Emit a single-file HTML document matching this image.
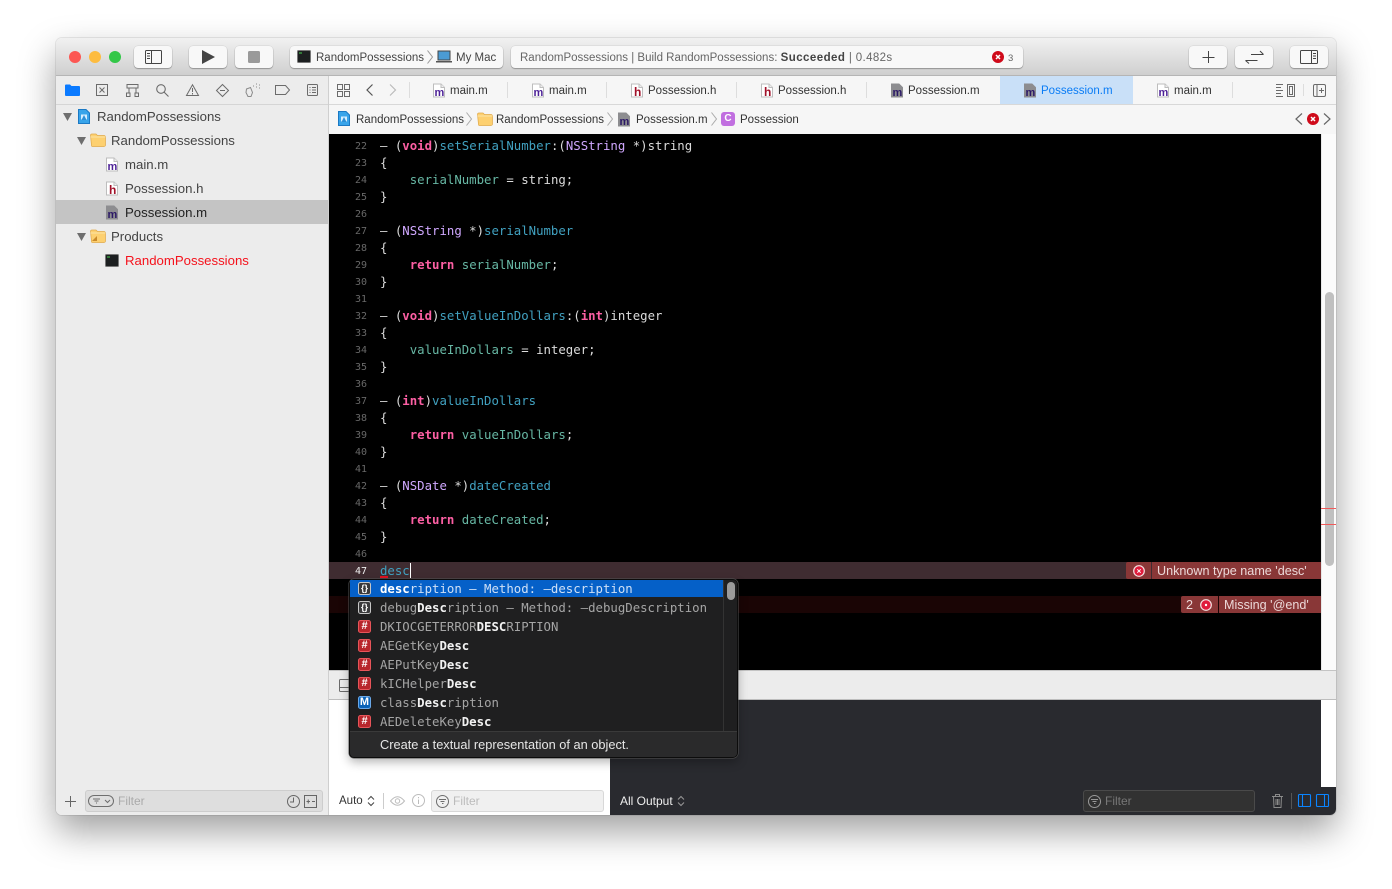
<!DOCTYPE html>
<html><head><meta charset="utf-8"><title>Xcode</title>
<style>
*{box-sizing:border-box}
html,body{margin:0;padding:0;width:1392px;height:889px;overflow:hidden;background:#fff}
body{font-family:"Liberation Sans",sans-serif;position:relative}
#win{position:absolute;left:56px;top:38px;width:1280px;height:777px;border-radius:6px;box-shadow:0 0 0 1px rgba(0,0,0,.08),0 16px 36px rgba(0,0,0,.38)}
.a{position:absolute}
.t{position:absolute;white-space:pre;line-height:16px;color:#3c3c3c;margin-top:1px}
svg{position:absolute;overflow:visible}
.btn{position:absolute;top:46px;height:22px;background:#f8f8f8;border-radius:4px;box-shadow:0 1px 1px rgba(0,0,0,.28),0 0 0 .5px rgba(0,0,0,.1)}
.tb{font-size:11.5px;top:49px;color:#444}
.tab{font-size:11.5px;top:82px;color:#333}
.jb{font-size:11.5px;top:111px;color:#333}
.sb{font-size:13.2px;color:#444}
.sep{position:absolute;top:82px;width:1px;height:16px;background:#ddd}
.ln{position:absolute;left:329px;width:38px;text-align:right;font:10px/17px "DejaVu Sans Mono","Liberation Mono",monospace;color:#686868;margin-top:1px}
.c{position:absolute;left:380px;white-space:pre;font:12.35px/17px "DejaVu Sans Mono","Liberation Mono",monospace;color:#dcdcdc;margin-top:1px}
.k{color:#fc5fa3;font-weight:bold}.p{color:#d0a8ff}.m{color:#41a1c0}.v{color:#67b7a4}
.r{position:absolute;left:380px;white-space:pre;font:12.35px/19px "DejaVu Sans Mono","Liberation Mono",monospace;color:#a5a5a5;margin-top:1px}
.r b{color:#f2f2f2}
.ic{position:absolute;left:358px;width:13px;height:13px;border-radius:2.5px;font:bold 11px/11px "Liberation Sans",sans-serif;text-align:center;color:#fff;border:1px solid #d9d9d9}
.h{background:#b8262c;border-color:#e8555a}
.b{background:#3a3a3c;border-color:#c6c6c6;font-size:9px}
.n{background:#0a62b8;border-color:#6aa8e8}
.e{position:absolute;background:#893737;height:17px;color:#ecd9d9;font-size:12.6px;line-height:17px;padding-top:1px;white-space:pre}
</style></head><body>
<svg width="0" height="0" style="position:absolute"><defs>
<symbol id="doc" viewBox="0 0 12 14"><path d="M.5.5h7.5l3.5 3.5v9.500h-11z" fill="#fff" stroke="#bdbdbd"/><path d="M8 .5v3.500h3.500" fill="#eee" stroke="#bdbdbd"/></symbol>
<symbol id="docg" viewBox="0 0 12 14"><path d="M.5.500h7.500l3.500 3.500v9.500h-11z" fill="#8d8d90" stroke="#8d8d90"/></symbol>
<symbol id="fold" viewBox="0 0 16 14"><path d="M.5 2.500a1.500 1.500 0 0 1 1.500-1.500h4l1.500 1.500h6.500a1.500 1.500 0 0 1 1.500 1.500v8a1.500 1.500 0 0 1-1.500 1.500h-11.500a1 1 0 0 1-1-1z" fill="#fdd070" stroke="#e0a94a" stroke-width=".7"/><path d="M.7 4h14.600" stroke="#fbe3a6"/></symbol>
<symbol id="proj" viewBox="0 0 12 15"><path d="M.5.500h7.500l3.500 3.500v10.500h-11z" fill="#38a4ea" stroke="#1b79c4"/><path d="M3 5.500h6v5h-6z" fill="#d6eeff"/><path d="M6 6l-2.500 5h5z" fill="#2c8fd6"/></symbol>
<symbol id="term" viewBox="0 0 14 13"><rect x=".5" y=".5" width="13" height="12" rx="1" fill="#1c1f20" stroke="#777"/><path d="M2 3h3" stroke="#48d050"/></symbol>
<symbol id="erri" viewBox="0 0 12 12"><circle cx="6" cy="6" r="6" fill="#cf0a1a"/><path d="M4 4l4 4M8 4l-4 4" stroke="#fff" stroke-width="1.500"/></symbol>
</defs></svg>

<div id="win"></div>

<!-- title bar -->
<div class="a" style="left:56px;top:38px;width:1280px;height:38px;background:linear-gradient(#f1f1f1,#cfcfcf);border-radius:6px 6px 0 0;border-bottom:1px solid #b5b5b5"></div>
<div class="a" style="left:69px;top:51px;width:12px;height:12px;border-radius:50%;background:#fc5753"></div>
<div class="a" style="left:89px;top:51px;width:12px;height:12px;border-radius:50%;background:#fdbc40"></div>
<div class="a" style="left:109px;top:51px;width:12px;height:12px;border-radius:50%;background:#33c748"></div>

<div class="btn" style="left:134px;width:38px"></div>
<svg style="left:145px;top:50px" width="17" height="14" fill="none" stroke="#444"><rect x=".5" y=".5" width="16" height="13" rx="1"/><path d="M6.500 .5v13M2 3.500h3M2 6h3M2 8.500h3"/></svg>
<div class="btn" style="left:189px;width:38px"></div>
<svg style="left:201px;top:50px" width="14" height="14"><path d="M1 0l13 7-13 7z" fill="#444"/></svg>
<div class="btn" style="left:235px;width:38px"></div>
<div class="a" style="left:248px;top:51px;width:12px;height:12px;border-radius:1.500px;background:#9a9a9a"></div>

<div class="btn" style="left:290px;width:213px"></div>
<svg style="left:297px;top:50px" width="14" height="13"><use href="#term"/></svg>
<div class="t tb" style="left:316px">RandomPossessions</div>
<svg style="left:427px;top:50px" width="6" height="14" fill="none" stroke="#999"><path d="M.5 .5l5 6.500-5 6.500"/></svg>
<svg style="left:436px;top:50px" width="16" height="13"><rect x="2" y="1" width="12" height="9" fill="#4b9bd3" stroke="#444"/><path d="M0 11h16v1.500h-16z" fill="#555"/></svg>
<div class="t tb" style="left:456px">My Mac</div>

<div class="btn" style="left:511px;width:512px"></div>
<div class="t tb" style="left:520px;color:#666">RandomPossessions | Build RandomPossessions: <b style="color:#444;letter-spacing:.45px">Succeeded</b><span style="letter-spacing:.35px"> | 0.482s</span></div>
<svg style="left:992px;top:51px" width="12" height="12"><use href="#erri"/></svg>
<div class="t" style="left:1008px;top:50px;font-size:9.500px;color:#666">3</div>

<div class="btn" style="left:1189px;width:38px"></div>
<svg style="left:1202px;top:51px" width="12" height="12" stroke="#444" fill="none"><path d="M6.500 0v12M.5 6.500h12"/></svg>
<div class="btn" style="left:1235px;width:38px"></div>
<svg style="left:1245px;top:50px" width="19" height="14" stroke="#444" fill="none"><path d="M6 4.500h12.500M15 1l3.500 3.500M.5 10.500h12M.5 10.500l3.500 3"/></svg>
<div class="btn" style="left:1290px;width:38px"></div>
<svg style="left:1300px;top:50px" width="18" height="14" fill="none" stroke="#444"><rect x=".5" y=".5" width="17" height="13" rx="1"/><path d="M11.500 .5v13M13 3.500h3M13 6h3M13 8.500h3"/></svg>

<!-- navigator -->
<div class="a" style="left:56px;top:76px;width:273px;height:739px;background:#ececec;border-right:1px solid #cfcfcf;border-radius:0 0 0 6px"></div>
<div class="a" style="left:56px;top:104px;width:272px;height:1px;background:#d5d5d5"></div>
<svg style="left:65px;top:84px" width="15" height="12"><path d="M0 1.500a1 1 0 0 1 1-1h4l1.500 1.500h7.500a1 1 0 0 1 1 1v1.500h-15zM0 4h15v7a1 1 0 0 1-1 1h-13a1 1 0 0 1-1-1z" fill="#0a7aff"/></svg>
<svg style="left:96px;top:84px" width="12" height="12" fill="none" stroke="#6b6b6b"><rect x=".5" y=".5" width="11" height="11"/><path d="M3.500 3.500l5 5M8.500 3.500l-5 5"/></svg>
<svg style="left:126px;top:84px" width="13" height="13" fill="none" stroke="#6b6b6b"><rect x="1" y=".5" width="11" height="3.500"/><rect x=".5" y="9" width="3.500" height="3.500"/><rect x="9" y="9" width="3.500" height="3.500"/><path d="M3 4v5M10 4v5"/></svg>
<svg style="left:156px;top:84px" width="13" height="13" fill="none" stroke="#6b6b6b" stroke-width="1.100"><circle cx="5" cy="5" r="4.300"/><path d="M8 8l4.500 4.500"/></svg>
<svg style="left:186px;top:84px" width="13" height="12" fill="none" stroke="#6b6b6b"><path d="M6.500 .8l6 10.700h-12zM6.500 4v4M6.500 9v1.500"/></svg>
<svg style="left:216px;top:84px" width="13" height="13" fill="none" stroke="#6b6b6b"><path d="M6.500 .5l6 6-6 6-6-6zM4 6.500h5"/></svg>
<svg style="left:245px;top:83px" width="16" height="14" fill="none" stroke="#8a8a8a"><path d="M1.500 6l4-1.500 2 5-1.500 4h-3l-2-4z"/><path d="M8 3h1M11 1h1M11 4h1M14 2h1M14 5h1" stroke-dasharray="1 1"/></svg>
<svg style="left:275px;top:85px" width="15" height="10" fill="none" stroke="#6b6b6b"><path d="M.5 .5h10l4 4.500-4 4.500h-10z"/></svg>
<svg style="left:307px;top:84px" width="11" height="12" fill="none" stroke="#6b6b6b"><rect x=".5" y=".5" width="10" height="11" rx="1"/><path d="M2.500 3.500h1M5 3.500h4M2.500 6h1M5 6h4M2.500 8.500h1M5 8.500h4"/></svg>

<div class="a" style="left:56px;top:200px;width:272px;height:24px;background:#c4c4c4"></div>
<svg style="left:63px;top:113px" width="9" height="8"><path d="M0 0h9l-4.500 8z" fill="#6e6e6e"/></svg>
<svg style="left:78px;top:109px" width="12" height="15"><use href="#proj"/></svg>
<div class="t sb" style="left:97px;top:108px">RandomPossessions</div>
<svg style="left:77px;top:137px" width="9" height="8"><path d="M0 0h9l-4.500 8z" fill="#6e6e6e"/></svg>
<svg style="left:90px;top:133px" width="16" height="14"><use href="#fold"/></svg>
<div class="t sb" style="left:111px;top:132px">RandomPossessions</div>
<svg style="left:106px;top:157px" width="12" height="15"><use href="#doc"/><text x="1.500" y="13" font-family="Liberation Sans,sans-serif" font-weight="bold" font-size="11" fill="#4b1f96">m</text></svg>
<div class="t sb" style="left:125px;top:156px">main.m</div>
<svg style="left:106px;top:181px" width="12" height="15"><use href="#doc"/><text x="3" y="13" font-family="Liberation Sans,sans-serif" font-weight="bold" font-size="12" fill="#a11129">h</text></svg>
<div class="t sb" style="left:125px;top:180px">Possession.h</div>
<svg style="left:106px;top:205px" width="12" height="15"><use href="#docg"/><text x="1.500" y="13" font-family="Liberation Sans,sans-serif" font-weight="bold" font-size="11" fill="#2b1866">m</text></svg>
<div class="t sb" style="left:125px;top:204px;color:#222">Possession.m</div>
<svg style="left:77px;top:233px" width="9" height="8"><path d="M0 0h9l-4.500 8z" fill="#6e6e6e"/></svg>
<svg style="left:90px;top:229px" width="16" height="14"><use href="#fold"/><path d="M2 12l5-5v5z" fill="#c98a2a"/></svg>
<div class="t sb" style="left:111px;top:228px">Products</div>
<svg style="left:105px;top:254px" width="14" height="13"><use href="#term"/></svg>
<div class="t sb" style="left:125px;top:252px;color:#f5121c">RandomPossessions</div>

<svg style="left:65px;top:796px" width="11" height="11" stroke="#666" fill="none"><path d="M5.500 0v11M0 5.500h11"/></svg>
<div class="a" style="left:85px;top:790px;width:238px;height:22px;background:#dedede;border:1px solid #cdcdcd;border-radius:3px"></div>
<svg style="left:88px;top:795px" width="26" height="12" fill="none" stroke="#6e6e6e"><rect x=".5" y=".5" width="25" height="11" rx="5.500"/><path d="M5 4h7M6.500 6h4M8 8h1M17 5l2.500 2.500 2.500-2.500"/></svg>
<div class="t" style="left:118px;top:792px;font-size:12px;color:#aaa">Filter</div>
<svg style="left:287px;top:795px" width="13" height="13" fill="none" stroke="#666"><circle cx="6.500" cy="6.500" r="6"/><path d="M6.500 2.500v4.500h-3.500"/></svg>
<svg style="left:304px;top:795px" width="13" height="13" fill="none" stroke="#666"><rect x=".5" y=".5" width="12" height="12"/><path d="M2.500 6.500h3.500M4.250 4.500v4M8 6.500h3"/></svg>

<!-- tab bar -->
<div class="a" style="left:329px;top:76px;width:1007px;height:29px;background:#f6f6f6;border-bottom:1px solid #d8d8d8"></div>
<div class="a" style="left:1000px;top:76px;width:133px;height:28px;background:#c9e0f8"></div>
<svg style="left:337px;top:84px" width="13" height="13" fill="none" stroke="#6b6b6b"><rect x=".5" y=".5" width="5" height="5"/><rect x="7.500" y=".5" width="5" height="5"/><rect x=".5" y="7.500" width="5" height="5"/><rect x="7.500" y="7.500" width="5" height="5"/></svg>
<svg style="left:366px;top:84px" width="8" height="12" fill="none" stroke="#555" stroke-width="1.200"><path d="M6.500 .5l-5.500 5.500 5.500 5.500"/></svg>
<svg style="left:389px;top:84px" width="8" height="12" fill="none" stroke="#bbb" stroke-width="1.200"><path d="M1 .5l5.500 5.500-5.500 5.500"/></svg>
<div class="sep" style="left:409px"></div><div class="sep" style="left:507px"></div><div class="sep" style="left:606px"></div><div class="sep" style="left:736px"></div><div class="sep" style="left:866px"></div><div class="sep" style="left:1232px"></div><div class="sep" style="left:1303px;height:12px;top:84px"></div>

<svg style="left:433px;top:83px" width="12" height="15"><use href="#doc"/><text x="1.500" y="13" font-family="Liberation Sans,sans-serif" font-weight="bold" font-size="11" fill="#4b1f96">m</text></svg>
<div class="t tab" style="left:450px">main.m</div>
<svg style="left:532px;top:83px" width="12" height="15"><use href="#doc"/><text x="1.500" y="13" font-family="Liberation Sans,sans-serif" font-weight="bold" font-size="11" fill="#4b1f96">m</text></svg>
<div class="t tab" style="left:549px">main.m</div>
<svg style="left:631px;top:83px" width="12" height="15"><use href="#doc"/><text x="3" y="13" font-family="Liberation Sans,sans-serif" font-weight="bold" font-size="12" fill="#a11129">h</text></svg>
<div class="t tab" style="left:648px">Possession.h</div>
<svg style="left:761px;top:83px" width="12" height="15"><use href="#doc"/><text x="3" y="13" font-family="Liberation Sans,sans-serif" font-weight="bold" font-size="12" fill="#a11129">h</text></svg>
<div class="t tab" style="left:778px">Possession.h</div>
<svg style="left:891px;top:83px" width="12" height="15"><use href="#docg"/><text x="1.500" y="13" font-family="Liberation Sans,sans-serif" font-weight="bold" font-size="11" fill="#2b1866">m</text></svg>
<div class="t tab" style="left:908px">Possession.m</div>
<svg style="left:1024px;top:83px" width="12" height="15"><use href="#docg"/><text x="1.500" y="13" font-family="Liberation Sans,sans-serif" font-weight="bold" font-size="11" fill="#2b1866">m</text></svg>
<div class="t tab" style="left:1041px;color:#0a7cf5">Possession.m</div>
<svg style="left:1157px;top:83px" width="12" height="15"><use href="#doc"/><text x="1.500" y="13" font-family="Liberation Sans,sans-serif" font-weight="bold" font-size="11" fill="#4b1f96">m</text></svg>
<div class="t tab" style="left:1174px">main.m</div>
<svg style="left:1276px;top:84px" width="19" height="13" fill="none" stroke="#6b6b6b"><path d="M0 .5h7M0 3.500h5M0 6.500h7M0 9.500h5M0 12.500h7"/><rect x="11.500" y=".5" width="7" height="12"/><rect x="13.500" y="2.500" width="3" height="8"/></svg>
<svg style="left:1313px;top:84px" width="13" height="13" fill="none" stroke="#6b6b6b"><rect x=".5" y=".5" width="12" height="12" rx="1.500"/><path d="M4 .5v12M6 6.500h5M8.500 4v5"/></svg>

<!-- jump bar -->
<div class="a" style="left:329px;top:105px;width:1007px;height:29px;background:#f6f6f6"></div>
<svg style="left:338px;top:111px" width="12" height="15"><use href="#proj"/></svg>
<div class="t jb" style="left:356px">RandomPossessions</div>
<svg style="left:466px;top:112px" width="6" height="14" fill="none" stroke="#aaa"><path d="M.5 .5l5 6.500-5 6.500"/></svg>
<svg style="left:477px;top:112px" width="16" height="14"><use href="#fold"/></svg>
<div class="t jb" style="left:496px">RandomPossessions</div>
<svg style="left:607px;top:112px" width="6" height="14" fill="none" stroke="#aaa"><path d="M.5 .5l5 6.500-5 6.500"/></svg>
<svg style="left:618px;top:112px" width="12" height="15"><use href="#docg"/><text x="1.500" y="13" font-family="Liberation Sans,sans-serif" font-weight="bold" font-size="11" fill="#2b1866">m</text></svg>
<div class="t jb" style="left:636px">Possession.m</div>
<svg style="left:711px;top:112px" width="6" height="14" fill="none" stroke="#aaa"><path d="M.5 .5l5 6.500-5 6.500"/></svg>
<div class="a" style="left:721px;top:112px;width:14px;height:14px;border-radius:3px;background:#c16fe0;color:#fff;font:bold 10px/14px 'Liberation Sans',sans-serif;text-align:center">C</div>
<div class="t jb" style="left:740px">Possession</div>
<svg style="left:1295px;top:113px" width="8" height="12" fill="none" stroke="#666" stroke-width="1.200"><path d="M7 .5l-6 5.500 6 5.500"/></svg>
<svg style="left:1307px;top:113px" width="12" height="12"><use href="#erri"/></svg>
<svg style="left:1323px;top:113px" width="8" height="12" fill="none" stroke="#666" stroke-width="1.200"><path d="M1 .5l6 5.500-6 5.500"/></svg>

<!-- editor -->
<div class="a" style="left:329px;top:134px;width:992px;height:536px;background:#000"></div>
<div class="a" style="left:1321px;top:134px;width:15px;height:536px;background:#fbfbfb;border-left:1px solid #e8e8e8"></div>
<div class="a" style="left:1325px;top:292px;width:9px;height:274px;border-radius:4.500px;background:#c0c0c0"></div>
<div class="a" style="left:1321px;top:508px;width:15px;height:1px;background:#f05a5a"></div>
<div class="a" style="left:1321px;top:524px;width:15px;height:1px;background:#f05a5a"></div>
<div class="a" style="left:329px;top:562px;width:992px;height:17px;background:#3f2c31"></div>
<div class="a" style="left:329px;top:596px;width:992px;height:17px;background:#1a0505"></div>

<div class="ln" style="top:137px">22</div><div class="ln" style="top:154px">23</div><div class="ln" style="top:171px">24</div><div class="ln" style="top:188px">25</div><div class="ln" style="top:205px">26</div><div class="ln" style="top:222px">27</div><div class="ln" style="top:239px">28</div><div class="ln" style="top:256px">29</div><div class="ln" style="top:273px">30</div><div class="ln" style="top:290px">31</div><div class="ln" style="top:307px">32</div><div class="ln" style="top:324px">33</div><div class="ln" style="top:341px">34</div><div class="ln" style="top:358px">35</div><div class="ln" style="top:375px">36</div><div class="ln" style="top:392px">37</div><div class="ln" style="top:409px">38</div><div class="ln" style="top:426px">39</div><div class="ln" style="top:443px">40</div><div class="ln" style="top:460px">41</div><div class="ln" style="top:477px">42</div><div class="ln" style="top:494px">43</div><div class="ln" style="top:511px">44</div><div class="ln" style="top:528px">45</div><div class="ln" style="top:545px">46</div><div class="ln" style="top:562px;color:#f0f0f0">47</div>

<div class="c" style="top:137px">– (<span class="k">void</span>)<span class="m">setSerialNumber</span>:(<span class="p">NSString</span> *)string</div>
<div class="c" style="top:154px">{</div>
<div class="c" style="top:171px">    <span class="v">serialNumber</span> = string;</div>
<div class="c" style="top:188px">}</div>
<div class="c" style="top:222px">– (<span class="p">NSString</span> *)<span class="m">serialNumber</span></div>
<div class="c" style="top:239px">{</div>
<div class="c" style="top:256px">    <span class="k">return</span> <span class="v">serialNumber</span>;</div>
<div class="c" style="top:273px">}</div>
<div class="c" style="top:307px">– (<span class="k">void</span>)<span class="m">setValueInDollars</span>:(<span class="k">int</span>)integer</div>
<div class="c" style="top:324px">{</div>
<div class="c" style="top:341px">    <span class="v">valueInDollars</span> = integer;</div>
<div class="c" style="top:358px">}</div>
<div class="c" style="top:392px">– (<span class="k">int</span>)<span class="m">valueInDollars</span></div>
<div class="c" style="top:409px">{</div>
<div class="c" style="top:426px">    <span class="k">return</span> <span class="v">valueInDollars</span>;</div>
<div class="c" style="top:443px">}</div>
<div class="c" style="top:477px">– (<span class="p">NSDate</span> *)<span class="m">dateCreated</span></div>
<div class="c" style="top:494px">{</div>
<div class="c" style="top:511px">    <span class="k">return</span> <span class="v">dateCreated</span>;</div>
<div class="c" style="top:528px">}</div>
<div class="c" style="top:562px;color:#41a1c0">desc</div>
<div class="a" style="left:380px;top:576px;width:8px;height:2px;background:#e01020"></div>
<div class="a" style="left:410px;top:563px;width:1px;height:15px;background:#fff"></div>

<div class="a" style="left:1126px;top:562px;width:25px;height:17px;background:#893737;border-radius:2px 0 0 2px"></div>
<svg style="left:1133px;top:565px" width="12" height="12" fill="none"><circle cx="6" cy="6" r="5.300" stroke="#f6e3e3" stroke-width="1.200" fill="#e01c3c"/><path d="M4.300 4.300l3.400 3.400M7.700 4.300l-3.400 3.400" stroke="#fff"/></svg>
<div class="e" style="left:1152px;top:562px;width:169px;padding-left:5px">Unknown type name 'desc'</div>
<div class="e" style="left:1181px;top:596px;width:37px;padding-left:5px;border-radius:2px 0 0 2px">2</div>
<svg style="left:1200px;top:599px" width="12" height="12" fill="none"><circle cx="6" cy="6" r="5.300" stroke="#f6e3e3" stroke-width="1.200" fill="#e01c3c"/><circle cx="6" cy="6" r="1.200" fill="#fff"/></svg>
<div class="e" style="left:1219px;top:596px;width:102px;padding-left:5px">Missing '@end'</div>

<!-- debug bar -->
<div class="a" style="left:329px;top:670px;width:1007px;height:30px;background:#ececec;border-top:1px solid #c4c4c4;border-bottom:1px solid #bdbdbd"></div>
<svg style="left:339px;top:679px" width="12" height="13" fill="none" stroke="#6b6b6b"><rect x=".5" y=".5" width="11" height="12" rx="1"/><path d="M.5 8.500h11"/></svg>

<!-- debug area -->
<div class="a" style="left:329px;top:700px;width:281px;height:115px;background:#fff"></div>
<div class="a" style="left:610px;top:700px;width:711px;height:90px;background:#292a2f"></div>
<div class="a" style="left:1321px;top:700px;width:15px;height:87px;background:#fff"></div>
<div class="a" style="left:610px;top:787px;width:726px;height:28px;background:#292a2f;border-radius:0 0 6px 0"></div>

<div class="t" style="left:339px;top:792px;font-size:11.5px;color:#333">Auto</div>
<svg style="left:367px;top:795px" width="8" height="12" fill="none" stroke="#444"><path d="M1 4.500l3-3 3 3M1 7.500l3 3 3-3"/></svg>
<div class="a" style="left:383px;top:793px;width:1px;height:16px;background:#ccc"></div>
<svg style="left:390px;top:796px" width="15" height="10" fill="none" stroke="#bcbcbc"><path d="M.5 5q7-8.500 14 0q-7 8.500-14 0z"/><circle cx="7.500" cy="5" r="2.200"/></svg>
<svg style="left:412px;top:794px" width="13" height="13" fill="none" stroke="#bcbcbc"><circle cx="6.500" cy="6.500" r="6"/><path d="M6.500 5.500v4.500M6.500 3v1.300"/></svg>
<div class="a" style="left:431px;top:790px;width:173px;height:22px;background:#f0f0f0;border:1px solid #d8d8d8;border-radius:3px"></div>
<svg style="left:436px;top:795px" width="13" height="13" fill="none" stroke="#6e6e6e"><circle cx="6.500" cy="6.500" r="6"/><path d="M3 4.500h7M4.500 6.500h4M6 8.500h1.500"/></svg>
<div class="t" style="left:453px;top:792px;font-size:12px;color:#bbb">Filter</div>

<div class="t" style="left:620px;top:792px;font-size:12px;color:#eee">All Output</div>
<svg style="left:677px;top:795px" width="8" height="12" fill="none" stroke="#999"><path d="M1 4.500l3-3 3 3M1 7.500l3 3 3-3"/></svg>
<div class="a" style="left:1083px;top:790px;width:172px;height:22px;background:#323232;border:1px solid #4a4a4a;border-radius:3px"></div>
<svg style="left:1088px;top:795px" width="13" height="13" fill="none" stroke="#999"><circle cx="6.500" cy="6.500" r="6"/><path d="M3 4.500h7M4.500 6.500h4M6 8.500h1.500"/></svg>
<div class="t" style="left:1105px;top:792px;font-size:12px;color:#777">Filter</div>
<svg style="left:1272px;top:794px" width="11" height="14" fill="none" stroke="#8a8a8a"><path d="M0 2.500h11M3.500 2.500v-2h4v2M1.500 2.500l.5 11h7l.5-11M4 5v6M5.500 5v6M7 5v6"/></svg>
<div class="a" style="left:1291px;top:793px;width:1px;height:16px;background:#555"></div>
<svg style="left:1298px;top:794px" width="13" height="13" fill="none" stroke="#0a84ff" stroke-width="1.100"><rect x=".5" y=".5" width="12" height="12" rx="1"/><path d="M4.500 .5v12"/></svg>
<svg style="left:1316px;top:794px" width="13" height="13" fill="none" stroke="#0a84ff" stroke-width="1.100"><rect x=".5" y=".5" width="12" height="12" rx="1"/><path d="M8.500 .5v12"/></svg>

<!-- completion popup -->
<div class="a" style="left:349px;top:579px;width:389px;height:179px;background:#1f1f20;border:1px solid #0c0c0c;border-radius:5px;box-shadow:0 0 0 .5px #555,0 4px 10px rgba(0,0,0,.3)"></div>
<div class="a" style="left:350px;top:580px;width:373px;height:17px;background:#0560c8"></div>
<div class="a" style="left:723px;top:580px;width:1px;height:151px;background:#333"></div>
<div class="a" style="left:727px;top:582px;width:8px;height:18px;border-radius:4px;background:#9a9a9a"></div>
<div class="a" style="left:350px;top:731px;width:387px;height:26px;background:#2a2a2b;border-top:1px solid #3a3a3a;border-radius:0 0 4px 4px"></div>

<div class="ic b" style="top:582px">{}</div><div class="ic b" style="top:601px">{}</div><div class="ic h" style="top:620px">#</div><div class="ic h" style="top:639px">#</div><div class="ic h" style="top:658px">#</div><div class="ic h" style="top:677px">#</div><div class="ic n" style="top:696px">M</div><div class="ic h" style="top:715px">#</div>

<div class="r" style="top:579px;color:#cfe0f6"><b style="color:#fff">desc</b>ription – Method: –description</div>
<div class="r" style="top:598px">debug<b>Desc</b>ription – Method: –debugDescription</div>
<div class="r" style="top:617px">DKIOCGETERROR<b>DESC</b>RIPTION</div>
<div class="r" style="top:636px">AEGetKey<b>Desc</b></div>
<div class="r" style="top:655px">AEPutKey<b>Desc</b></div>
<div class="r" style="top:674px">kICHelper<b>Desc</b></div>
<div class="r" style="top:693px">class<b>Desc</b>ription</div>
<div class="r" style="top:712px">AEDeleteKey<b>Desc</b></div>
<div class="t" style="left:380px;top:736px;font-size:12.8px;color:#e6e6e6">Create a textual representation of an object.</div>
</body></html>
